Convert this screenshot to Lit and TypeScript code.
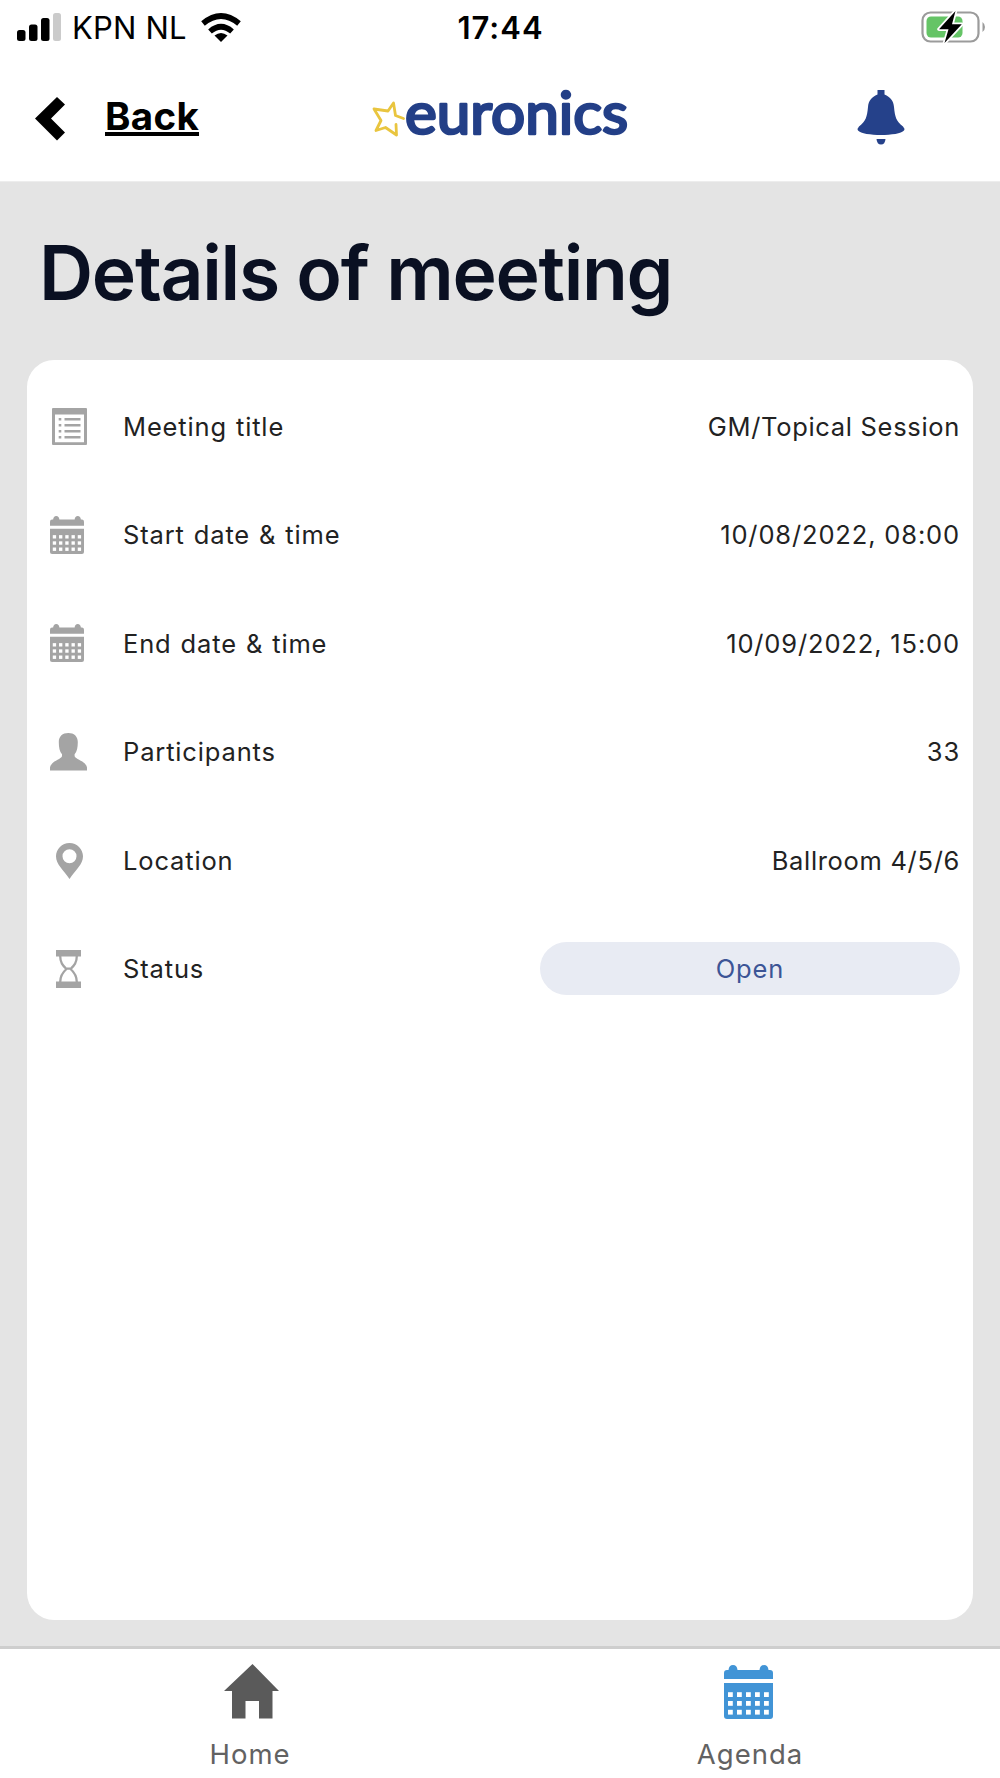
import { LitElement, html, css, svg, TemplateResult } from "lit";
import { customElement } from "lit/decorators.js";

const dots = [0, 1, 2].flatMap((r) =>
  [0, 1, 2, 3, 4].map((c) => svg`<rect x=${4 + c * 9} y=${27.2 + r * 8.8} width="4.8" height="4.8" fill="#fff"/>`),
);

const calendar = (cls: string) => html`<svg class=${cls} viewBox="0 0 49 54" preserveAspectRatio="none">
  <path fill="currentColor" d="M0 14V8Q0 5 3 5H4.5Q5 0 9 0T13.5 5H35.5Q36 0 40 0T44.5 5H46Q49 5 49 8V14Z"/>
  <path fill="currentColor" d="M0 18H49V51Q49 54 46 54H3Q0 54 0 51Z"/>
  ${dots}
</svg>`;

const listIcon = html`<svg class="ic-list" viewBox="0 0 35 37">
  <path fill="currentColor" fill-rule="evenodd" d="M1 0H34Q35 0 35 1V36Q35 37 34 37H1Q0 37 0 36V1Q0 0 1 0ZM3 6.5V34.2H32V6.5Z"/>
  <path fill="none" stroke="currentColor" stroke-width="2.4" d="M12.5 11.3H28.5M12.5 17.3H28.5M12.5 23.3H28.5M12.5 29.3H28.5M6.7 11.3H9.3M6.7 17.3H9.3M6.7 23.3H9.3M6.7 29.3H9.3"/>
</svg>`;

const personIcon = html`<svg class="ic-person" viewBox="0 0 37 38">
  <path fill="currentColor" d="M18.3 0C24 0 27.8 3.3 27.8 9C27.8 14.5 27 18.6 24.6 21.2V23.3C26 26.6 36 28.3 37 34.5V37.6H0V34.5C1 28.3 10.6 26.6 12 23.3V21.2C9.6 18.6 8.8 14.5 8.8 9C8.8 3.3 12.6 0 18.3 0Z"/>
</svg>`;

const pinIcon = html`<svg class="ic-pin" viewBox="0 0 27 36">
  <path fill="currentColor" fill-rule="evenodd" d="M13.5 0C21 0 27 6 27 13.3C27 21.5 19.5 27 13.5 36C7.5 27 0 21.5 0 13.3C0 6 6 0 13.5 0ZM13.5 6.3A7 7 0 1 0 13.5 20.3A7 7 0 1 0 13.5 6.3Z"/>
</svg>`;

const glassIcon = html`<svg class="ic-glass" viewBox="0 0 25 38">
  <path fill="currentColor" d="M0 0H25V6.5H0ZM0 31.5H25V38H0Z"/>
  <path fill="none" stroke="currentColor" stroke-width="2.3" d="M4.2 6C4.2 13 7 15.5 10.5 19C7 22 4.2 25 4.2 32M20.8 6C20.8 13 18 15.5 14.5 19C18 22 20.8 25 20.8 32M11 18.6H14"/>
</svg>`;

interface Row {
  icon: TemplateResult;
  label: string;
  value: string;
  kind: string;
}

const rows: Row[] = [
  { icon: listIcon, label: "Meeting title", value: "GM/Topical Session", kind: "text" },
  { icon: calendar("ic-cal"), label: "Start date & time", value: "10/08/2022, 08:00", kind: "date" },
  { icon: calendar("ic-cal"), label: "End date & time", value: "10/09/2022, 15:00", kind: "date" },
  { icon: personIcon, label: "Participants", value: "33", kind: "date" },
  { icon: pinIcon, label: "Location", value: "Ballroom 4/5/6", kind: "text" },
  { icon: glassIcon, label: "Status", value: "Open", kind: "pill" },
];

@customElement("app-root")
export class AppRoot extends LitElement {
  static styles = css`
    :host {
      display: flex;
      flex-direction: column;
      width: 1000px;
      height: 1778px;
      overflow: hidden;
      background: #e4e4e4;
      font-family: Inter, "Liberation Sans", sans-serif;
      color: #222;
    }
    * { box-sizing: border-box; }
    svg { display: block; flex: none; }
    .status {
      height: 54px;
      background: #fff;
      display: grid;
      grid-template-columns: 1fr auto 1fr;
      align-items: center;
      padding: 0 15px 0 16px;
      font-size: 31px;
      line-height: 56px;
      color: #000;
    }
    .left { display: flex; align-items: center; }
    .signal { width: 45px; height: 30px; margin-top: -2px; }
    .carrier { margin-left: 11px; letter-spacing: 0.2px; width: 117px; white-space: nowrap; }
    .wifi { width: 40px; height: 30px; margin: -1px 0 0 12px; }
    .clock { font-weight: 600; letter-spacing: 1px; }
    .battery { width: 64px; height: 34px; justify-self: end; margin-top: -3px; }
    .header {
      height: 128px;
      background: #fff;
      display: grid;
      grid-template-columns: 372px 256px 1fr;
      align-items: start;
      border-bottom: 1px solid #ededed;
    }
    .back { display: flex; align-items: flex-start; padding: 38px 0 0 35px; color: #000; }
    .chev { width: 31px; height: 50px; margin-top: 3px; }
    .backtext {
      margin-left: 39px;
      font-size: 38.5px;
      line-height: 49px;
      font-weight: 700;
      letter-spacing: 0.3px;
      text-decoration: underline;
      text-decoration-thickness: 4px;
      text-underline-offset: 2px;
      text-decoration-skip-ink: none;
    }
    .logo { width: 260px; height: 90px; margin-top: 16px; }
    .logotext { font-family: Lato, sans-serif; font-size: 58px; font-weight: 400; }
    .bell { width: 48px; height: 55px; margin: 36px 0 0 229px; }
    .title {
      margin: 0;
      padding: 41px 0 0 39px;
      height: 178px;
      font-size: 75px;
      line-height: 99px;
      font-weight: 600;
      letter-spacing: -1.3px;
      color: #0a1022;
      white-space: nowrap;
    }
    .card {
      margin: 0 27px;
      height: 1260px;
      background: #fff;
      border-radius: 27px;
      padding: 12.4px 13px 0 22px;
    }
    .row {
      height: 108.4px;
      display: grid;
      grid-template-columns: 74px 1fr 420px;
      align-items: center;
      font-size: 25.5px;
      letter-spacing: 0.85px;
      white-space: nowrap;
    }
    .label { word-spacing: 1px; }
    .icon { color: #a4a4a4; }
    .ic-list { width: 35px; height: 37px; margin-left: 3px; }
    .ic-cal { width: 34px; height: 38px; margin-left: 0.5px; }
    .ic-person { width: 37px; height: 38px; margin-left: 0.5px; }
    .ic-pin { width: 27px; height: 36px; margin: 1px 0 0 7px; }
    .ic-glass { width: 25px; height: 38px; margin-left: 6.5px; }
    .value { text-align: right; }
    .text { letter-spacing: 0.68px; }
    .pill {
      height: 53px;
      line-height: 53px;
      border-radius: 27px;
      background: #e8ebf3;
      color: #3c5596;
      text-align: center;
    }
    .tabs {
      margin-top: auto;
      height: 132px;
      background: #fff;
      border-top: 3px solid #cecece;
      display: grid;
      grid-template-columns: 1fr 1fr;
      color: #626262;
      font-size: 27.5px;
      line-height: 34px;
      letter-spacing: 1px;
    }
    .tab { display: flex; flex-direction: column; align-items: center; padding-top: 15px; }
    .home { width: 55px; height: 55px; margin-left: 3px; color: #5a5a5a; }
    .agenda { width: 49px; height: 54px; margin: 1px 3px 0 0; color: #4194d6; }
    .tablabel { margin-top: 18px; }
  `;

  render() {
    return html`
      <div class="status">
        <div class="left">
          <svg class="signal" viewBox="0 0 45 30">
            <rect x="1" y="18" width="8.5" height="11" rx="2.5"/>
            <rect x="13" y="12.5" width="8.5" height="16.5" rx="2.5"/>
            <rect x="25" y="6" width="8.5" height="23" rx="2.5"/>
            <rect x="37" y="1" width="8" height="28" rx="2.5" fill="#cbcbcb"/>
          </svg>
          <span class="carrier">KPN NL</span>
          <svg class="wifi" viewBox="0 0 40 30">
            <g fill="none" stroke="#000" stroke-width="5.6">
              <path d="M2 10.5Q20 -4.5 38 10.5"/>
              <path d="M9 18.5Q20 9 31 18.5"/>
            </g>
            <path d="M13.5 22.5Q20 17.5 26.5 22.5L20 29Z"/>
          </svg>
        </div>
        <span class="clock">17:44</span>
        <svg class="battery" viewBox="0 0 64 34">
          <rect x="1.5" y="2.5" width="56" height="29" rx="8" fill="none" stroke="#9b9b9b" stroke-width="2.2"/>
          <path d="M61.5 12Q64 14 64 17T61.5 22Z" fill="#9b9b9b"/>
          <rect x="5.5" y="6.5" width="36" height="21" rx="4.5" fill="#65c466"/>
          <path d="M34.5 1L18 19.2H27.5L23.5 33L40.8 14.2H31Z" fill="#000" stroke="#fff" stroke-width="3.5" paint-order="stroke" stroke-linejoin="round"/>
        </svg>
      </div>
      <div class="header">
        <div class="back">
          <svg class="chev" viewBox="0 0 31 50"><path d="M22 2L0 23.5L22 45.5L30 37.5L16 23.5L30 9.5Z"/></svg>
          <span class="backtext">Back</span>
        </div>
        <svg class="logo" viewBox="372 70 260 90">
          <path d="M374 109L388 111L393.5 103L395.5 115.5L403.5 118.5M396 124.5L396.5 135L385.5 127.5L376 130.5L381 120.5L374 109" fill="none" stroke="#e9c53f" stroke-width="2.8" stroke-linejoin="round" stroke-linecap="round"/>
          <text class="logotext" x="405" y="134" textLength="223" lengthAdjust="spacingAndGlyphs" fill="#233f87" stroke="#233f87" stroke-width="2.7" stroke-linejoin="round">euronics</text>
        </svg>
        <svg class="bell" viewBox="0 0 48 55" fill="#25418a">
          <path d="M20.5 0H27.5V4.5C33.5 7 36.5 11 37 17C38 27 39 31 46 36.5Q48 38.5 47 40.5C42 46.5 6 46.5 1 40.5Q0 38.5 2 36.5C9 31 10 27 11 17C11.5 11 14.5 7 20.5 4.5Z"/>
          <path d="M19.5 49H28.5Q28 54.5 24 54.5T19.5 49Z"/>
        </svg>
      </div>
      <h1 class="title">Details of meeting</h1>
      <div class="card">
        ${rows.map(
          (r) => html`<div class="row">
            <div class="icon">${r.icon}</div>
            <div class="label">${r.label}</div>
            <div class="value ${r.kind}">${r.value}</div>
          </div>`,
        )}
      </div>
      <div class="tabs">
        <div class="tab">
          <svg class="home" viewBox="0 0 55 55"><path fill="currentColor" d="M28.5 0L55 27H48.5V54.5H35V37H21.5V54.5H8V27H0Z"/></svg>
          <span class="tablabel">Home</span>
        </div>
        <div class="tab">
          ${calendar("agenda")}
          <span class="tablabel">Agenda</span>
        </div>
      </div>
    `;
  }
}
